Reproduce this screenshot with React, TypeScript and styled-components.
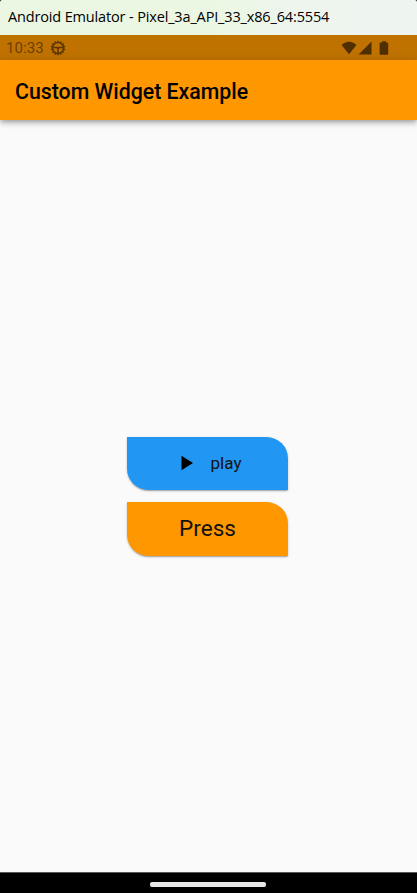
import React from "react";
import styled, { createGlobalStyle } from "styled-components";

const GlobalStyle = createGlobalStyle`
  * { box-sizing: border-box; }
  html, body { margin: 0; background: #000; }
`;

const Emulator = styled.div`
  width: 417px;
  height: 893px;
  display: flex;
  flex-direction: column;
  overflow: hidden;
  background: #000;
  font-family: Roboto, sans-serif;
`;

const WindowTitle = styled.header`
  height: 35px;
  flex: none;
  padding: 6px 0 0 8px;
  border-radius: 2px 2px 0 0;
  background: linear-gradient(90deg, #ebf7e3 0%, #ebf7e3 52%, #eef5ee 72%, #eef4f0 100%);
  color: #000;
  font: 14.5px/21px "Open Sans", sans-serif;
  letter-spacing: -0.15px;
  white-space: nowrap;
`;

const StatusBar = styled.div`
  height: 25px;
  flex: none;
  display: flex;
  align-items: center;
  padding: 1px 28px 0 6px;
  background: #bf7200;
  color: #4f2f00;
`;

const Clock = styled.span`
  width: 44px;
  font-size: 15px;
  line-height: 18px;
  letter-spacing: 0.1px;
  color: #6b4000;
`;

const StatusIcons = styled.div`
  display: flex;
  align-items: center;
  margin-left: auto;
`;

const Glyph = styled.svg<{ $gap?: number }>`
  display: block;
  flex: none;
  margin-left: ${(p) => p.$gap ?? 0}px;
`;

const AppBar = styled.div`
  height: 60px;
  flex: none;
  display: flex;
  align-items: center;
  padding: 3px 15px 0;
  background: #ff9800;
  position: relative;
  box-shadow: 0 2px 4px -1px rgba(0, 0, 0, 0.2), 0 4px 5px rgba(0, 0, 0, 0.14),
    0 1px 9px rgba(0, 0, 0, 0.12);
`;

const AppTitle = styled.h1`
  margin: 0;
  font-size: 21.3px;
  line-height: 28px;
  font-weight: 500;
  color: #000;
  white-space: nowrap;
`;

const Body = styled.main`
  flex: 1;
  display: flex;
  flex-direction: column;
  align-items: center;
  justify-content: center;
  gap: 12px;
  background: #fafafa;
`;

const LeafButton = styled.button<{ $color: string; $size: number; $inset?: string }>`
  width: 160.5px;
  height: 53.5px;
  display: flex;
  align-items: center;
  justify-content: center;
  gap: 16px;
  padding: ${(p) => p.$inset ?? "0"};
  margin-right: 2px;
  border: 0;
  border-radius: 0 21.5px 0 21.5px;
  background: ${(p) => p.$color};
  color: #111;
  font: 400 ${(p) => p.$size}px/26px Roboto, sans-serif;
  box-shadow: 0 2px 1px -1px rgba(0, 0, 0, 0.16), 0 1px 2px rgba(0, 0, 0, 0.16),
    0 1px 3px rgba(0, 0, 0, 0.1);
`;

const NavBar = styled.footer`
  height: 21px;
  flex: none;
  display: flex;
  justify-content: center;
  padding: 9px 2px 0 0;
  border-top: 1px solid #555;
  background: #000;
`;

const HomeHandle = styled.div`
  width: 116px;
  height: 5px;
  border-radius: 2px;
  background: #e8e8e8;
`;

const teeth = Array.from({ length: 14 }, (_, i) => (i * 360) / 14);

function DebugGear() {
  return (
    <Glyph width="16" height="16" viewBox="0 0 16 16" fill="none" stroke="#5d3700">
      <circle cx="8" cy="8" r="5.5" strokeWidth="1.7" />
      {teeth.map((a) => (
        <path key={a} d="M8 2V.7" strokeWidth="1.5" transform={`rotate(${a} 8 8)`} />
      ))}
      <path d="M3 7.5h10M8 8v5" strokeWidth="1.5" />
      <path d="M6 7.5h4L8 10z" fill="#5d3700" stroke="none" />
    </Glyph>
  );
}

export default function App() {
  return (
    <>
      <GlobalStyle />
      <Emulator>
        <WindowTitle>Android Emulator - Pixel_3a_API_33_x86_64:5554</WindowTitle>
        <StatusBar>
          <Clock>10:33</Clock>
          <DebugGear />
          <StatusIcons>
            <Glyph width="16" height="14" viewBox="0 0 16 14" fill="currentColor">
              <path d="M8 13.3.6 4.1C2.5 2.1 5 .8 8 .8s5.5 1.3 7.4 3.3z" />
            </Glyph>
            <Glyph $gap={1} width="14" height="14" viewBox="0 0 14 14" fill="currentColor">
              <path d="M13.5.6v13H.6z" />
            </Glyph>
            <Glyph $gap={7} width="10" height="14" viewBox="0 0 10 14" fill="currentColor">
              <path d="M3 .2h4v1.3h1.3q.9 0 .9.9v10.4q0 .9-.9.9H1.5q-.9 0-.9-.9V2.4q0-.9.9-.9H3z" />
            </Glyph>
          </StatusIcons>
        </StatusBar>
        <AppBar>
          <AppTitle>Custom Widget Example</AppTitle>
        </AppBar>
        <Body>
          <LeafButton $color="#2196f3" $size={17.1} $inset="0 0 0 7px">
            <Glyph width="14" height="16" viewBox="0 0 14 16" fill="#000">
              <path d="M1.5.7v14.6L13 8z" />
            </Glyph>
            play
          </LeafButton>
          <LeafButton $color="#ff9800" $size={22.5} $inset="0 0 2px 0">
            Press
          </LeafButton>
        </Body>
        <NavBar>
          <HomeHandle />
        </NavBar>
      </Emulator>
    </>
  );
}
